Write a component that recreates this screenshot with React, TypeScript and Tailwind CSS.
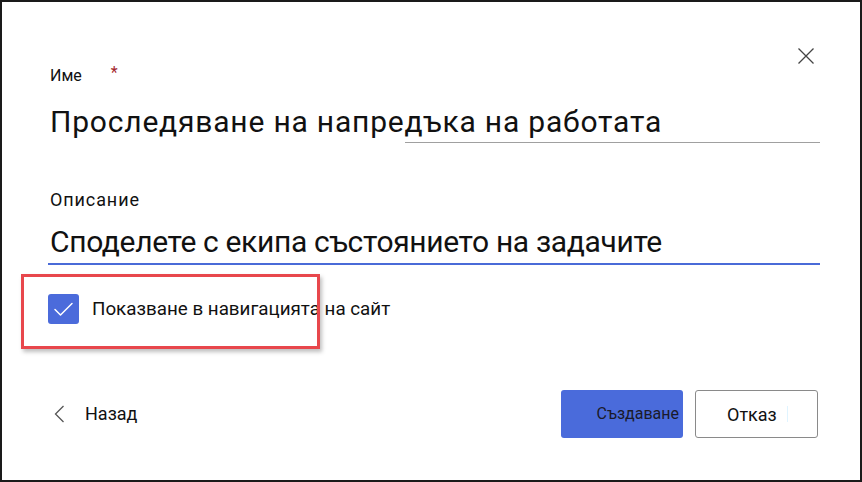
export default function App() {
  return (
    <div className="w-[862px] h-[482px] bg-white border-2 border-[#1a1a1a] relative overflow-hidden font-['Roboto','Noto_Sans',sans-serif] text-[#111]">
      {/* close */}
      <div className="flex justify-end pt-[46px] pr-[46px]">
        <button className="w-4 h-4 text-[#444]">
          <svg viewBox="0 0 16 16" className="w-4 h-4" fill="none" stroke="currentColor" strokeWidth={1.3}>
            <path d="M0.5 0.5L15.5 15.5M15.5 0.5L0.5 15.5" />
          </svg>
        </button>
      </div>

      <div className="pl-[46px] w-[818px]">
        {/* Name */}
        <div className="flex items-start mt-[2px] h-[20px] text-[16px] leading-[20px]">
          <span className="pl-[2px]">Име</span>
          <span className="ml-[29px] -mt-[3px] text-[#a4262c]">*</span>
        </div>
        <div className="mt-[18px] pl-[2px] text-[30px] leading-[36px] tracking-[0.8px] whitespace-nowrap">
          Проследяване на напредъка на работата
        </div>
        <div className="ml-[357px] h-px bg-[#a0a0a0] mt-[2px]" />

        {/* Description */}
        <div className="mt-[46px] pl-[2px] text-[18px] leading-[22px] tracking-[0.9px]">Описание</div>
        <div className="mt-[13px] pl-[2px] text-[30px] leading-[36px] tracking-[-0.35px] whitespace-nowrap">
          Споделете с екипа състоянието на задачите
        </div>
        <div className="h-[2px] bg-[#4a6bd8] mt-[3px]" />

        {/* Checkbox */}
        <div className="mt-[29px] flex items-center gap-[13px]">
          <div className="w-[31px] h-[30px] rounded-[3px] bg-[#4b6bdb] shrink-0">
            <svg viewBox="0 0 31 30" className="w-[31px] h-[30px]" fill="none" stroke="white" strokeWidth={1.5} strokeLinecap="round" strokeLinejoin="round">
              <path d="M7 15.5L12.5 21L24 9.5" />
            </svg>
          </div>
          <span className="text-[18.8px] leading-[24px] whitespace-nowrap">Показване в навигацията на сайт</span>
        </div>
      </div>

      {/* annotation box */}
      <div className="absolute left-[19px] top-[272px] w-[299px] h-[75px] border-[3px] border-[#e8474c] shadow-[2px_3px_4px_rgba(0,0,0,0.25)]" />

      {/* footer */}
      <div className="mt-[66px] pl-[51px] pr-[42px] flex items-center">
        <button className="flex items-center gap-[20px] text-[18px] leading-[24px]">
          <svg viewBox="0 0 12 18" className="w-[12px] h-[18px]" fill="none" stroke="#555" strokeWidth={1.3}>
            <path d="M10.5 1L2.5 9L10.5 17" />
          </svg>
          <span>Назад</span>
        </button>
        <div className="ml-auto flex gap-[12px]">
          <button className="w-[122px] h-[48px] rounded-[3px] bg-[#4a6bdb] text-[#1a1a2a] text-[16px] flex items-center justify-end pr-[4px]">
            Създаване
          </button>
          <button className="w-[123px] h-[48px] rounded-[3px] border border-[#8a8a8a] bg-white text-[18px] flex items-center pl-[31px]">
            Отказ
            <span className="ml-[10px] w-px h-[16px] bg-[#e0f4ff]" />
          </button>
        </div>
      </div>
    </div>
  );
}
